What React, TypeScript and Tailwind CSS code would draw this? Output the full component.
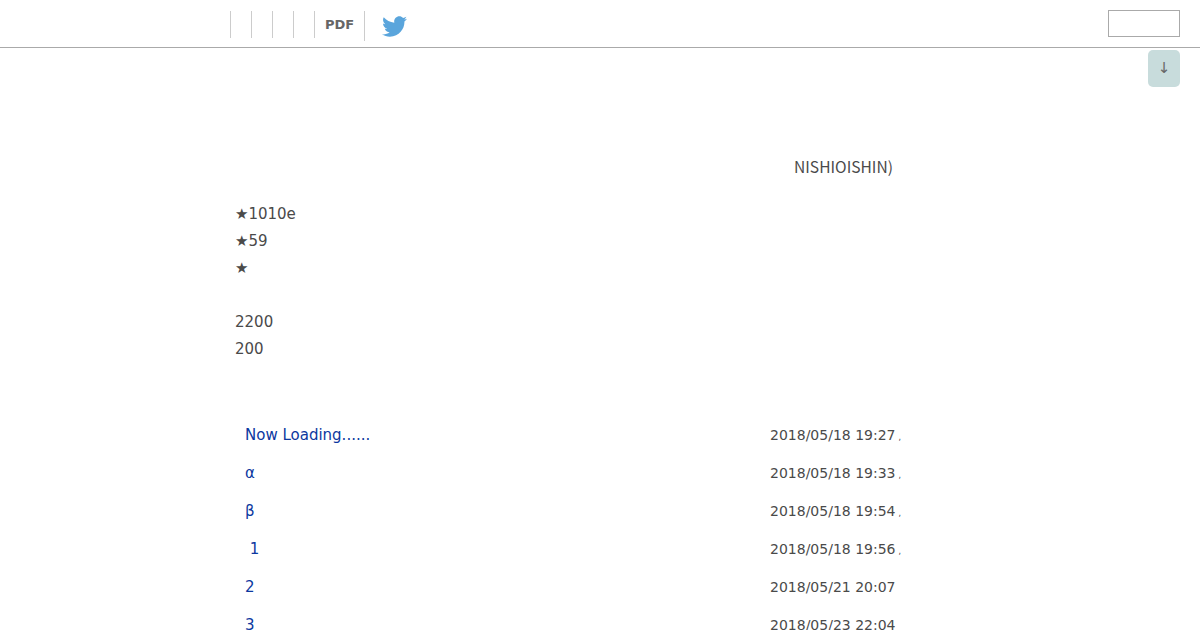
import { FaTwitter } from "react-icons/fa";

const notes = ["★1010e", "★59", "★", "", "2200", "200"];

const chapters = [
  { title: "Now Loading......", date: "2018/05/18 19:27", mark: true },
  { title: "α", date: "2018/05/18 19:33", mark: true },
  { title: "β", date: "2018/05/18 19:54", mark: true },
  { title: "\u00a01", date: "2018/05/18 19:56", mark: true },
  { title: "2", date: "2018/05/21 20:07", mark: false },
  { title: "3", date: "2018/05/23 22:04", mark: false },
];

export default function App() {
  return (
    <div className="h-[630px] overflow-hidden bg-white font-['DejaVu_Sans',sans-serif] text-[#4a4a4a]">
      <header className="flex h-[48px] items-start border-b border-[#aaaaaa]">
        <nav className="ml-[230px] mt-[11px] flex h-[30px] items-start">
          <div className="h-[27px] w-[21px] border-l border-[#cccccc]"></div>
          <div className="h-[27px] w-[21px] border-l border-[#cccccc]"></div>
          <div className="h-[27px] w-[21px] border-l border-[#cccccc]"></div>
          <div className="h-[27px] w-[21px] border-l border-[#cccccc]"></div>
          <div className="flex h-[27px] w-[50px] items-center justify-center border-l border-[#cccccc] text-[13px] font-bold text-[#666666]">PDF</div>
          <div className="flex h-[30px] items-center border-l border-[#cccccc] pl-[17px]">
            <FaTwitter className="h-[25px] w-[25px] text-[#5aa5dc]" />
          </div>
        </nav>
        <div className="ml-auto mr-[20px] mt-[10px] h-[27px] w-[72px] border border-[#aaaaaa]"></div>
      </header>

      <div className="flex justify-end pr-[20px] pt-[2px]">
        <div className="flex h-[37px] w-[32px] items-center justify-center rounded-[5px] bg-[#c8dcdc] text-[15px] text-[#666666]">↓</div>
      </div>

      <main className="ml-[235px] w-[730px]">
        <p className="mt-[66px] pl-[559px] font-['Noto_Sans_CJK_JP',sans-serif] text-[15.6px] leading-[27px]">NISHIOISHIN)</p>
        <div className="mt-[21px] text-[15px] leading-[27px]">
          {notes.map((line, i) => (
            <p key={i} className="h-[27px]">{line}</p>
          ))}
        </div>
        <ul className="mt-[53px]">
          {chapters.map((c) => (
            <li key={c.date} className="flex h-[38px] items-center pl-[10px]">
              <a className="w-[525px] whitespace-pre text-[15px] text-[#0c38a0]">{c.title}</a>
              <span className="text-[14px]">{c.date}</span>
              {c.mark && <span className="ml-[3px] mt-[6px] text-[8px]">,</span>}
            </li>
          ))}
        </ul>
      </main>
    </div>
  );
}
